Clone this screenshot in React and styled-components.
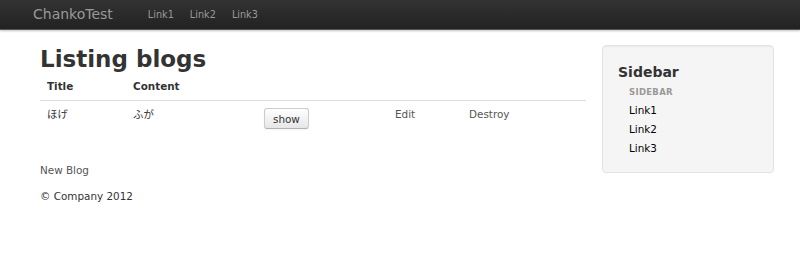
import React from "react";
import styled, { createGlobalStyle } from "styled-components";

const Global = createGlobalStyle`
  html, body { margin: 0; padding: 0; background: #fff; }
  body {
    font-family: "DejaVu Sans", Verdana, "Noto Sans CJK JP", sans-serif;
    font-size: 10.4px;
    line-height: 18px;
    color: #333;
  }
  a { text-decoration: none; }
`;

const Navbar = styled.div`
  height: 29px;
  background: linear-gradient(to bottom, #333 0%, #222 100%);
  border-bottom: 1px solid #555;
  box-shadow: 0 1px 2px rgba(0,0,0,0.25);
  display: flex;
  align-items: center;
  padding-left: 33px;
`;

const Brand = styled.a`
  font-size: 14px;
  color: #999;
  margin-right: 27px;
  line-height: 29px;
`;

const NavLink = styled.a`
  font-size: 9.7px;
  color: #999;
  padding: 0 8px;
  line-height: 29px;
`;

const Container = styled.div`
  display: flex;
  padding: 15px 0 0 40px;
  gap: 16px;
  align-items: flex-start;
`;

const Main = styled.div`
  width: 546px;
`;

const Title = styled.h1`
  margin: 0;
  font-size: 23px;
  font-weight: bold;
  line-height: 28px;
  color: #333;
`;

const Table = styled.table`
  width: 546px;
  border-collapse: collapse;
  margin-bottom: 23px;
  table-layout: fixed;
`;

const Th = styled.th`
  box-sizing: border-box;
  text-align: left;
  font-weight: bold;
  padding: 4px 7px 5px;
  line-height: 18px;
  width: ${(p) => p.w}px;
  border-bottom: 1px solid #ddd;
`;

const Td = styled.td`
  padding: 4px 7px 5px;
  vertical-align: top;
  line-height: 18px;
  height: 28px;
`;

const Button = styled.button`
  font-family: inherit;
  font-size: 10.4px;
  color: #333;
  height: 21px;
  padding: 0 8px;
  margin-top: 3px;
  background: linear-gradient(to bottom, #fff 0%, #e6e6e6 100%);
  border: 1px solid #ccc;
  border-bottom-color: #b3b3b3;
  border-radius: 3px;
  box-shadow: inset 0 1px 0 rgba(255,255,255,.2), 0 1px 2px rgba(0,0,0,.05);
`;

const GrayLink = styled.a`
  color: #555;
`;

const Footer = styled.div`
  margin-top: 8px;
  line-height: 18px;
`;

const Sidebar = styled.div`
  width: 155px;
  padding: 16px 0 14px 15px;
  background: #f5f5f5;
  border: 1px solid #e3e3e3;
  border-radius: 4px;
  box-shadow: inset 0 1px 1px rgba(0,0,0,.05);
`;

const SideTitle = styled.h3`
  margin: 0 0 1px;
  font-size: 14px;
  line-height: 20px;
  font-weight: bold;
`;

const SideList = styled.ul`
  list-style: none;
  margin: 0;
  padding: 0 0 0 11px;
`;

const SideHeader = styled.li`
  font-size: 8.5px;
  font-weight: bold;
  color: #999;
  text-transform: uppercase;
  line-height: 18px;
  letter-spacing: 0.3px;
`;

const SideLink = styled.li`
  line-height: 19px;
  color: #000;
`;

export default function App() {
  return (
    <>
      <Global />
      <Navbar>
        <Brand>ChankoTest</Brand>
        <NavLink>Link1</NavLink>
        <NavLink>Link2</NavLink>
        <NavLink>Link3</NavLink>
      </Navbar>
      <Container>
        <Main>
          <Title>Listing blogs</Title>
          <Table>
            <thead>
              <tr>
                <Th w={86}>Title</Th>
                <Th w={131}>Content</Th>
                <Th w={131}></Th>
                <Th w={74}></Th>
                <Th w={124}></Th>
              </tr>
            </thead>
            <tbody>
              <tr>
                <Td>ほげ</Td>
                <Td>ふが</Td>
                <Td><Button>show</Button></Td>
                <Td><GrayLink>Edit</GrayLink></Td>
                <Td><GrayLink>Destroy</GrayLink></Td>
              </tr>
            </tbody>
          </Table>
          <GrayLink>New Blog</GrayLink>
          <Footer>© Company 2012</Footer>
        </Main>
        <Sidebar>
          <SideTitle>Sidebar</SideTitle>
          <SideList>
            <SideHeader>Sidebar</SideHeader>
            <SideLink>Link1</SideLink>
            <SideLink>Link2</SideLink>
            <SideLink>Link3</SideLink>
          </SideList>
        </Sidebar>
      </Container>
    </>
  );
}
